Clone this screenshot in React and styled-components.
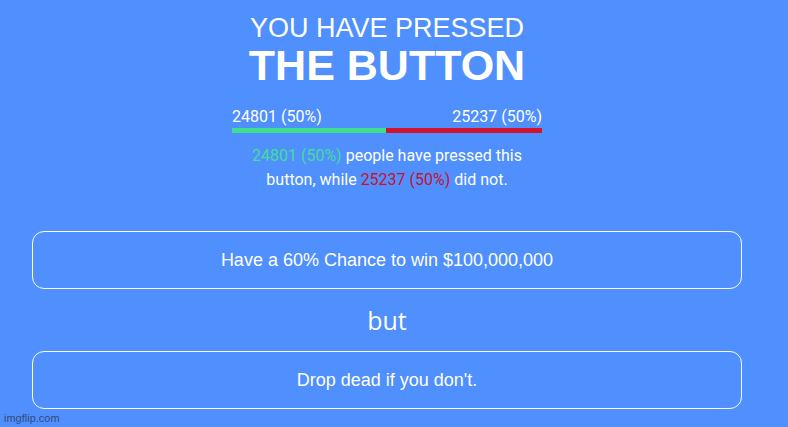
import React from "react";
import styled, { createGlobalStyle } from "styled-components";

const pressed = 24801;
const notPressed = 25237;
const total = pressed + notPressed;
const pct = (n) => Math.round((n / total) * 100);

const GlobalStyle = createGlobalStyle`
  html, body {
    margin: 0;
    padding: 0;
    background: #4f8ffe;
  }
  body {
    width: 788px;
    height: 427px;
    overflow: hidden;
  }
`;

export default function App() {
  const greenWidth = (pressed / total) * 100;

  return (
    <Page>
      <GlobalStyle />
      <Header>
        <Subtitle>YOU HAVE PRESSED</Subtitle>
        <Title>THE BUTTON</Title>
      </Header>

      <Stats>
        <StatLabels>
          <span>
            {pressed} ({pct(pressed)}%)
          </span>
          <span>
            {notPressed} ({pct(notPressed)}%)
          </span>
        </StatLabels>
        <Bar>
          <BarFill color="#3ee08e" style={{ width: `${greenWidth}%` }} />
          <BarFill color="#d2132b" style={{ flex: 1 }} />
        </Bar>
        <Summary>
          <Count tone="#45de98">
            {pressed} ({pct(pressed)}%)
          </Count>{" "}
          people have pressed this
          <br />
          button, while{" "}
          <Count tone="#c8112d">
            {notPressed} ({pct(notPressed)}%)
          </Count>{" "}
          did not.
        </Summary>
      </Stats>

      <Choice $first>Have a 60% Chance to win $100,000,000</Choice>
      <But>but</But>
      <Choice>Drop dead if you don't.</Choice>

      <Watermark>imgflip.com</Watermark>
    </Page>
  );
}

const Page = styled.div`
  position: relative;
  width: 774px;
  height: 427px;
  display: flex;
  flex-direction: column;
  align-items: center;
  padding-top: 12px;
  box-sizing: border-box;
  color: #fff;
`;

const Header = styled.div`
  display: flex;
  flex-direction: column;
  align-items: center;
  font-family: "Liberation Sans", Arial, sans-serif;
`;

const Subtitle = styled.div`
  font-size: 27px;
  line-height: 32px;
`;

const Title = styled.div`
  font-size: 43px;
  font-weight: bold;
  line-height: 42px;
`;

const Stats = styled.div`
  width: 310px;
  margin-top: 22px;
  font-family: Roboto, sans-serif;
  font-size: 16px;
`;

const StatLabels = styled.div`
  display: flex;
  justify-content: space-between;
  line-height: 18px;
`;

const Bar = styled.div`
  display: flex;
  height: 5px;
  margin-top: 2px;
`;

const BarFill = styled.div`
  background: ${(p) => p.color};
`;

const Summary = styled.div`
  text-align: center;
  line-height: 24px;
  margin-top: 11px;
  margin-left: -40px;
  margin-right: -40px;
`;

const Count = styled.span`
  color: ${(p) => p.tone};
`;

const Choice = styled.div`
  flex-shrink: 0;
  width: 710px;
  height: 58px;
  box-sizing: border-box;
  border: 1px solid #fff;
  border-radius: 12px;
  display: flex;
  align-items: center;
  justify-content: center;
  font-family: "Liberation Sans", Arial, sans-serif;
  font-size: 18px;
  margin-top: ${(p) => (p.$first ? "39px" : "0")};
`;

const But = styled.div`
  flex-shrink: 0;
  font-family: "Open Sans", sans-serif;
  font-size: 25px;
  height: 62px;
  display: flex;
  align-items: center;
  justify-content: center;
`;

const Watermark = styled.div`
  position: absolute;
  left: 4px;
  bottom: 3px;
  font-family: "Liberation Sans", Arial, sans-serif;
  font-size: 11px;
  color: rgba(40, 50, 70, 0.75);
`;
